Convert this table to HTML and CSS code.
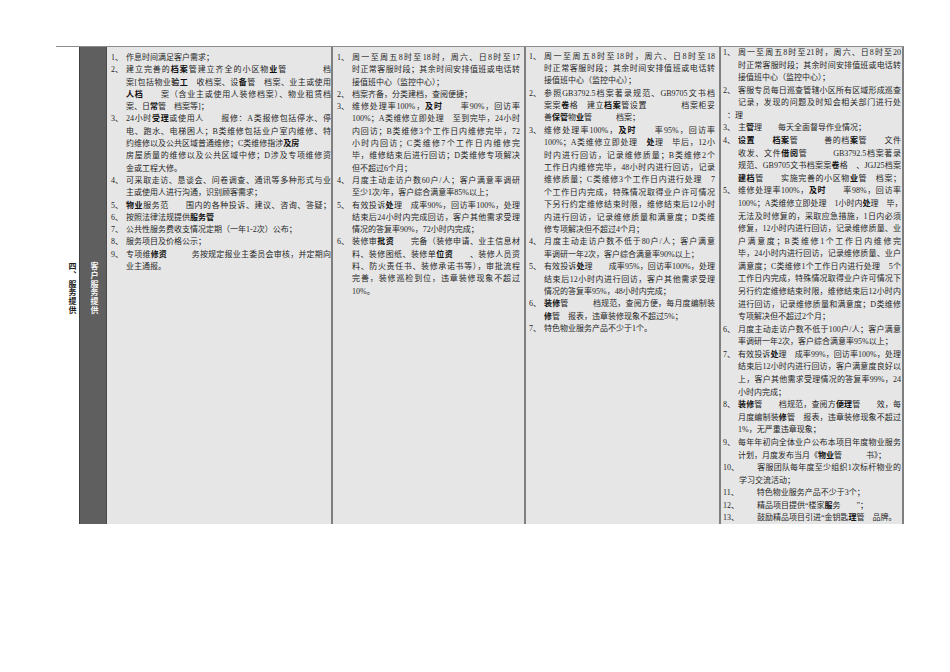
FILE: index.html
```html
<!DOCTYPE html>
<html lang="zh-CN">
<head>
<meta charset="utf-8">
<title>服务提供</title>
<link rel="stylesheet" href="styles.css">
</head>
<body>
<div class="sheet">
  <div class="cell c1"><div class="v">四、服务提供</div></div>
  <div class="cell c2"><div class="v">客户服务提供</div></div>

  <div class="cell c3">
    <div class="item"><span class="n">1、</span><div class="t"><span>作息时间满足客户需求；</span></div></div>
    <div class="item"><span class="n">2、</span><div class="t">
      <span class="j">建立完善的<b>档案</b>管建立齐全的小区物<b>业</b>管　　　　档</span>
      <span class="j">案[包括物业<b>验工</b>　收档案、设<b>备</b>管　档案、业主或使用</span>
      <span class="j"><b>人档</b>　　案（含业主或使用人装修档案）、物业租赁档</span>
      <span>案、日<b>常</b>管　档案等]；</span></div></div>
    <div class="item"><span class="n">3、</span><div class="t">
      <span class="j">24小时<b>受理</b>或使用人　　报修：A类报修包括停水、停</span>
      <span class="j">电、跑水、电梯困人；B类维修包括业户室内维修、特</span>
      <span>约维修以及公共区域普通维修；C类维修指涉<b>及房</b></span>
      <span class="j">房屋质量的维修以及公共区域中修；D涉及专项维修资</span>
      <span>金或工程大修。</span></div></div>
    <div class="item"><span class="n">4、</span><div class="t">
      <span class="j">可采取走访、恳谈会、问卷调查、通讯等多种形式与业</span>
      <span>主或使用人进行沟通，识别顾客需求；</span></div></div>
    <div class="item"><span class="n">5、</span><div class="t">
      <span class="j"><b>物业</b>服务范　　围内的各种投诉、建议、咨询、答疑；</span></div></div>
    <div class="item"><span class="n">6、</span><div class="t"><span>按照法律法规提供<b>服务管</b></span></div></div>
    <div class="item"><span class="n">7、</span><div class="t"><span>公共性服务费收支情况定期（一年1-2次）公布；</span></div></div>
    <div class="item"><span class="n">8、</span><div class="t"><span>服务项目及价格公示；</span></div></div>
    <div class="item"><span class="n">9、</span><div class="t">
      <span class="j">专项维<b>修资</b>　　　务按规定报业主委员会审核，并定期向</span>
      <span>业主通报。</span></div></div>
  </div>

  <div class="cell c4">
    <div class="item"><span class="n">1、</span><div class="t">
      <span class="j">周一至周五8时至18时，周六、日8时至17</span>
      <span class="j">时正常客服时段；其余时间安排值班或电话转</span>
      <span>接值班中心（监控中心）；</span></div></div>
    <div class="item"><span class="n">2、</span><div class="t"><span>档案齐备，分类建档，查阅便捷；</span></div></div>
    <div class="item"><span class="n">3、</span><div class="t">
      <span class="j">维修处理率100%，<b>及时</b>　　率90%，回访率</span>
      <span class="j">100%；A类维修立即处理　至到完毕，24小时</span>
      <span class="j">内回访；B类维修3个工作日内维修完毕，72</span>
      <span class="j">小时内回访；C类维修7个工作日内维修完</span>
      <span class="j">毕，维修结束后进行回访；D类维修专项解决</span>
      <span>但不超过6个月；</span></div></div>
    <div class="item"><span class="n">4、</span><div class="t">
      <span class="j">月度主动走访户数60户/人；客户满意率调研</span>
      <span>至少1次/年，客户综合满意率85%以上；</span></div></div>
    <div class="item"><span class="n">5、</span><div class="t">
      <span class="j">有效投诉<b>处</b>理　成率90%，回访率100%，处理</span>
      <span class="j">结束后24小时内完成回访，客户其他需求受理</span>
      <span>情况的答复率90%，72小时内完成；</span></div></div>
    <div class="item"><span class="n">6、</span><div class="t">
      <span class="j">装修审<b>批资</b>　　完备（装修申请、业主信息材</span>
      <span class="j">料、装修图纸、装修单<b>位资</b>　　、装修人员资</span>
      <span class="j">料、防火责任书、装修承诺书等），审批流程</span>
      <span class="j">完善，装修巡检到位，违章装修现象不超过</span>
      <span>10%。</span></div></div>
  </div>

  <div class="cell c5">
    <div class="item"><span class="n">1、</span><div class="t">
      <span class="j">周一至周五8时至18时，周六、日8时至18</span>
      <span class="j">时正常客服时段；其余时间安排值班或电话转</span>
      <span>接值班中心（监控中心）；</span></div></div>
    <div class="item"><span class="n">2、</span><div class="t">
      <span class="j">参照GB3792.5档案著录规范、GB9705文书档</span>
      <span class="j">案案<b>卷</b>格　建立<b>档案</b>管设置　　　　档案柜妥</span>
      <span>善<b>保管</b>物<b>业</b>管　　　档案；</span></div></div>
    <div class="item"><span class="n">3、</span><div class="t">
      <span class="j">维修处理率100%，<b>及时</b>　　率95%，回访率</span>
      <span class="j">100%；A类维修立即处理　<b>处</b>理　毕后，12小</span>
      <span class="j">时内进行回访，记录维修质量；B类维修2个</span>
      <span class="j">工作日内维修完毕，48小时内进行回访，记录</span>
      <span class="j">维修质量；C类维修3个工作日内进行处理　7</span>
      <span class="j">个工作日内完成，特殊情况取得业户许可情况</span>
      <span class="j">下另行约定维修结束时限，维修结束后12小时</span>
      <span class="j">内进行回访，记录维修质量和满意度；D类维</span>
      <span>修专项解决但不超过4个月；</span></div></div>
    <div class="item"><span class="n">4、</span><div class="t">
      <span class="j">月度主动走访户数不低于80户/人；客户满意</span>
      <span>率调研一年2次，客户综合满意率90%以上；</span></div></div>
    <div class="item"><span class="n">5、</span><div class="t">
      <span class="j">有效投诉<b>处</b>理　　成率95%，回访率100%，处理</span>
      <span class="j">结束后12小时内进行回访，客户其他需求受理</span>
      <span>情况的答复率95%，48小时内完成；</span></div></div>
    <div class="item"><span class="n">6、</span><div class="t">
      <span class="j"><b>装修</b>管　　　档规范，查阅方便，每月度编制装</span>
      <span><b>修</b>管　报表，违章装修现象不超过5%；</span></div></div>
    <div class="item"><span class="n">7、</span><div class="t"><span>特色物业服务产品不少于1个。</span></div></div>
  </div>

  <div class="cell c6">
    <div class="item"><span class="n">1、</span><div class="t">
      <span class="j">周一至周五8时至21时，周六、日8时至20</span>
      <span class="j">时正常客服时段；其余时间安排值班或电话转</span>
      <span>接值班中心（监控中心）；</span></div></div>
    <div class="item"><span class="n">2、</span><div class="t">
      <span class="j">客服专员每日巡查管辖小区所有区域形成巡查</span>
      <span class="j">记录，发现的问题及时知会相关部门进行处</span>
      <span class="out">：理</span></div></div>
    <div class="item"><span class="n">3、</span><div class="t"><span>主<b>管</b>理　　每天全面督导作业情况；</span></div></div>
    <div class="item"><span class="n">4、</span><div class="t">
      <span class="j"><b>设置</b>　　<b>档案</b>管　　　善的档<b>案</b>管　　文件</span>
      <span class="j">收发、文件<b>借阅</b>管　　　GB3792.5档案著录</span>
      <span class="j">规范、GB9705文书档案案<b>卷</b>格　、JGJ25档案</span>
      <span class="j"><b>建档</b>管　　实施完善的小区物<b>业</b>管　档案；</span></div></div>
    <div class="item"><span class="n">5、</span><div class="t">
      <span class="j">维修处理率100%，<b>及时</b>　　率98%，回访率</span>
      <span class="j">100%；A类维修立即处理　1小时内<b>处</b>理　毕，</span>
      <span class="j">无法及时修复的，采取应急措施，1日内必须</span>
      <span class="j">修复，12小时内进行回访，记录维修质量、业</span>
      <span class="j">户满意度；B类维修1个工作日内维修完</span>
      <span class="j">毕，24小时内进行回访，记录维修质量、业户</span>
      <span class="j">满意度；C类维修1个工作日内进行处理　5个</span>
      <span class="j">工作日内完成，特殊情况取得业户许可情况下</span>
      <span class="j">另行约定维修结束时限，维修结束后12小时内</span>
      <span class="j">进行回访，记录维修质量和满意度；D类维修</span>
      <span>专项解决但不超过2个月；</span></div></div>
    <div class="item"><span class="n">6、</span><div class="t">
      <span class="j">月度主动走访户数不低于100户/人；客户满意</span>
      <span>率调研一年2次，客户综合满意率95%以上；</span></div></div>
    <div class="item"><span class="n">7、</span><div class="t">
      <span class="j">有效投诉<b>处</b>理　成率99%，回访率100%，处理</span>
      <span class="j">结束后12小时内进行回访，客户满意度良好以</span>
      <span class="j">上，客户其他需求受理情况的答复率99%，24</span>
      <span>小时内完成；</span></div></div>
    <div class="item"><span class="n">8、</span><div class="t">
      <span class="j"><b>装修</b>管　　档规范，查阅方<b>便理</b>管　　效，每</span>
      <span class="j">月度编制装<b>修</b>管　报表，违章装修现象不超过</span>
      <span>1%，无严重违章现象；</span></div></div>
    <div class="item"><span class="n">9、</span><div class="t">
      <span class="j">每年年初向全体业户公布本项目年度物业服务</span>
      <span>计划，月度发布当月《<b>物业</b>管　　　书》；</span></div></div>
    <div class="item"><span class="n">10、</span><div class="t">
      <span class="j"><span class="gap"></span>客服团队每年度至少组织1次标杆物业的</span>
      <span>学习交流活动；</span></div></div>
    <div class="item"><span class="n">11、</span><div class="t"><span><span class="gap"></span>特色物业服务产品不少于3个；</span></div></div>
    <div class="item"><span class="n">12、</span><div class="t"><span><span class="gap"></span>精品项目提供“楼家<b>服</b>务　　”；</span></div></div>
    <div class="item"><span class="n">13、</span><div class="t"><span><span class="gap"></span>鼓励精品项目引进“金钥匙<b>理</b>管　品牌。</span></div></div>
  </div>
</div>
</body>
</html>
```

FILE: styles.css
```css
html, body {
  margin: 0;
  padding: 0;
  background: #ffffff;
}

.sheet {
  box-sizing: border-box;
  margin: 46px 0 0 56px;
  width: 848px;
  height: 478px;
  display: grid;
  grid-template-columns: 23px 28px 224px 193px 195px 185px;
  border-top: 1px solid #8c8c8c;
  border-bottom: 2px solid #7f7f7f;
  font-family: "Liberation Serif", "Noto Sans CJK SC", serif;
  font-size: 8px;
  color: #262626;
}

.cell {
  box-sizing: border-box;
  min-width: 0;
  overflow: visible;
  --lh: 12.3px;
}

.c1 {
  background: #ffffff;
  display: flex;
  align-items: center;
  justify-content: flex-end;
  padding-right: 2px;
  padding-top: 4px;
}

.c2 {
  background: #5f5f5f;
  border-left: 1px solid #3e3e3e;
  border-right: 1px solid #4a4a4a;
  color: #ffffff;
  display: flex;
  align-items: center;
  justify-content: center;
  padding-top: 4px;
  padding-left: 2px;
}

.v {
  writing-mode: vertical-rl;
  text-orientation: upright;
  font-family: "Noto Sans CJK SC", sans-serif;
  font-size: 8px;
  line-height: 10px;
  letter-spacing: 0.8px;
  white-space: nowrap;
  font-weight: 700;
}

.c1 .v {
  color: #1e1e1e;
}

.c2 .v {
  color: #f4f4f4;
}

.c3, .c4, .c5, .c6 {
  background: #e6e6e6;
}

.c3 {
  padding: 5px 0 0 4px;
}

.c4 {
  border-left: 2px solid #7f7f7f;
  padding: 5px 4px 0 4px;
}

.c5 {
  --lh: 12.4px;
  border-left: 2px solid #7f7f7f;
  padding: 3.5px 4px 0 3px;
}

.c6 {
  --lh: 12.58px;
  border-left: 2px solid #7f7f7f;
  border-right: 2px solid #7f7f7f;
  padding: 0 1px 0 2px;
}

.item {
  display: flex;
}

.n {
  flex: 0 0 15px;
  white-space: nowrap;
  height: var(--lh);
  line-height: var(--lh);
}

.t {
  flex: 1 1 auto;
  min-width: 0;
}

.t > span {
  display: block;
  white-space: nowrap;
  height: var(--lh);
  line-height: var(--lh);
}

.t > span.j {
  text-align: justify;
  text-align-last: justify;
}

.t > span.out {
  margin-left: -11px;
}

.gap {
  display: inline-block;
  width: 18px;
}

b {
  font-weight: 700;
  color: #111111;
}
```
